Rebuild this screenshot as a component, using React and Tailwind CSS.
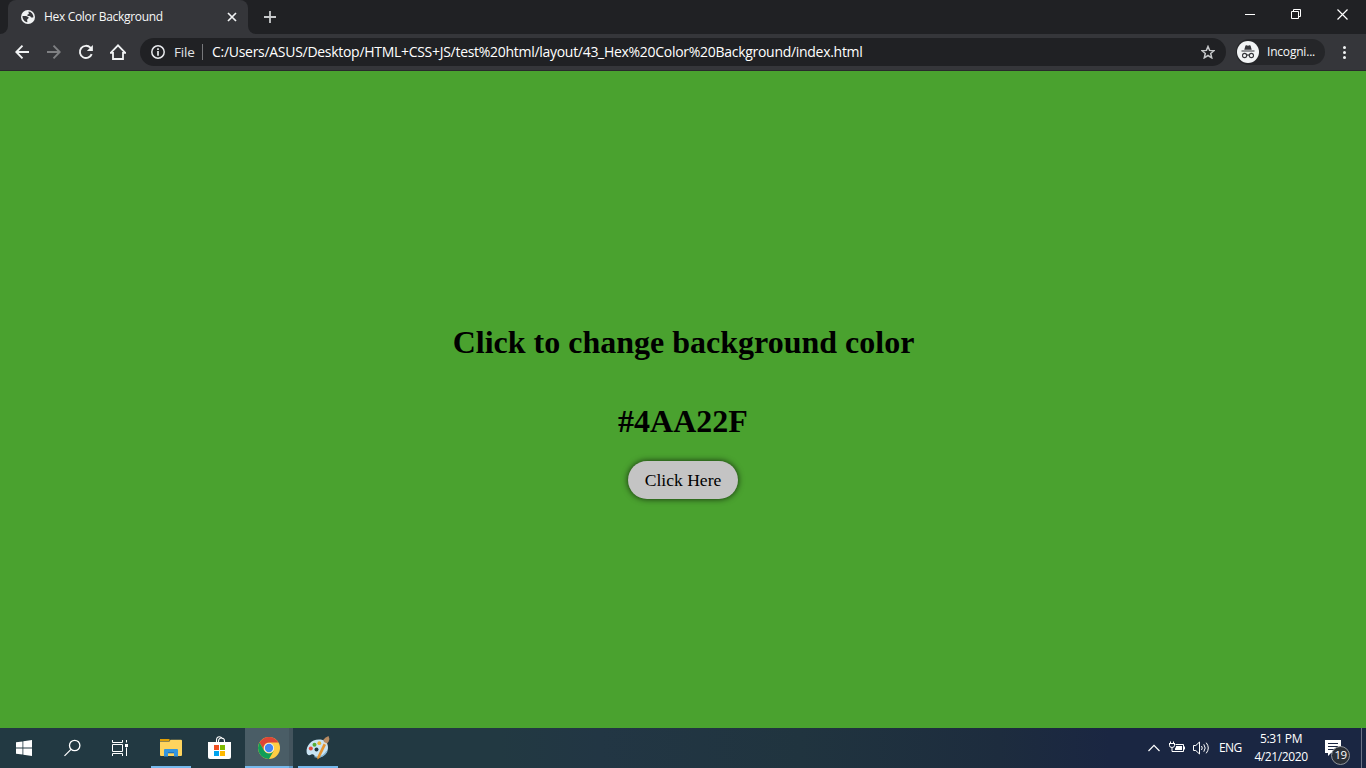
const ui = "font-['Open_Sans','Noto_Sans',sans-serif]";

function TabBar() {
  return (
    <div className="flex h-[34px] bg-[#202124]">
      <div className="flex w-2 items-end bg-[#35363a]">
        <div className="h-[34px] w-2 rounded-br-lg bg-[#202124]" />
      </div>
      <div className="w-[240px] bg-[#202124]">
        <div className="flex h-[34px] items-center rounded-t-lg bg-[#35363a] pl-[13px] pr-[11px]">
          <svg className="h-[14px] w-[14px]" viewBox="0 0 14 14">
            <circle cx="7" cy="7" r="7" fill="#f1f3f4" />
            <path d="M1.500 6h3.300c1.500 0 1.700 1.200 2.900 1.300 0 1.700-1.500 1.200-1.600 2.700 0 .8.6 1.300.1 2.200C3.500 11.800 1.400 9.100 1.500 6z" fill="#35363a" />
            <path d="M7.600 1.600c-.6 1.300.7 1.200.2 2.200-.4.8-1.700.6-1.600 1.500.1 1 1.500.5 2.300.6 1.200.1 1.100 1.300 1.900 1.600.8.2 1.200-.2 2-.3-.1-2.700-2-5.400-4.800-5.600z" fill="#35363a" />
          </svg>
          <span className={`ml-[9px] whitespace-nowrap text-[12px] leading-4 tracking-[-0.32px] text-[#f7f8f8] ${ui}`}>Hex Color Background</span>
          <svg className="ml-auto h-[10px] w-[10px]" viewBox="0 0 10 10" stroke="#f1f3f4" strokeWidth="1.700">
            <path d="M1 1l8 8M9 1l-8 8" />
          </svg>
        </div>
      </div>
      <div className="w-2 bg-[#35363a]">
        <div className="h-[34px] w-2 rounded-bl-lg bg-[#202124]" />
      </div>
      <svg className="ml-2 mt-[11px] h-3 w-3" viewBox="0 0 12 12" stroke="#c8cacc" strokeWidth="1.800">
        <path d="M6 0v12M0 6h12" />
      </svg>
      <div className="ml-auto flex pr-[18px] pt-[9px]">
        <svg className="h-[11px] w-[11px]" viewBox="0 0 11 11" stroke="#fff">
          <path d="M0 5.500h10" />
        </svg>
        <svg className="ml-[35px] h-[11px] w-[11px]" viewBox="0 0 11 11" fill="none" stroke="#fff">
          <path d="M.5 2.500h7v7h-7zM2.500 2.500v-2h7v7h-2" />
        </svg>
        <svg className="ml-[35px] h-[11px] w-[11px]" viewBox="0 0 11 11" stroke="#fff" strokeWidth="1.200">
          <path d="M.5.5l10 10M10.500.5l-10 10" />
        </svg>
      </div>
    </div>
  );
}

function Toolbar() {
  return (
    <div className="flex h-[37px] items-center border-b border-[#29292c] bg-[#35363a] pl-[15px]">
      <svg className="h-[14px] w-[14px]" viewBox="0 0 14 14" fill="none" stroke="#f1f3f4" strokeWidth="1.900">
        <path d="M14 7H1.500M7.500.7L1.300 7l6.200 6.300" />
      </svg>
      <svg className="ml-[18px] h-[14px] w-[14px]" viewBox="0 0 14 14" fill="none" stroke="#7f8083" strokeWidth="1.900">
        <path d="M0 7h12.500M6.500.7L12.700 7l-6.200 6.300" />
      </svg>
      <svg className="ml-[17px] h-4 w-4" viewBox="0 0 16 16">
        <path d="M13.700 10.100A6.100 6.100 0 1 1 12.400 3.700L13.500 4.800" fill="none" stroke="#f1f3f4" strokeWidth="1.900" />
        <path d="M14.900 1v6h-6z" fill="#f1f3f4" />
      </svg>
      <svg className="ml-4 h-4 w-4" viewBox="0 0 16 16" fill="none" stroke="#f1f3f4" strokeWidth="1.800">
        <path d="M0 8.800h3V15h10V8.800h3M.7 8.800L8 1.300l7.300 7.500" />
      </svg>
      <div className="ml-[14px] flex h-7 w-[1086px] items-center rounded-full bg-[#202124] pl-[11px] pr-[11px]">
        <svg className="h-[14px] w-[14px]" viewBox="0 0 14 14">
          <circle cx="7" cy="7" r="6.200" fill="none" stroke="#e8eaed" strokeWidth="1.500" />
          <path d="M7 3.200v1.700M7 6v4.700" stroke="#e8eaed" strokeWidth="1.700" />
        </svg>
        <span className={`ml-[9px] w-[21px] whitespace-nowrap text-[13.500px] leading-5 tracking-[-0.2px] text-[#e0e2e4] ${ui}`}>File</span>
        <div className="ml-[7px] h-4 w-px bg-[#77787b]" />
        <span className={`ml-[9px] whitespace-nowrap text-[14px] leading-5 tracking-[-0.29px] text-white ${ui}`}>
          C:/Users/ASUS/Desktop/HTML+CSS+JS/test%20html/layout/43_Hex%20Color%20Background/index.html
        </span>
        <svg className="ml-auto h-[14px] w-[14px]" viewBox="0 0 14 14" fill="none" stroke="#c6c8ca" strokeWidth="1.500">
          <path d="M7 1.500l1.600 3.900 4.400.3-3.300 2.800 1 4.300L7 10.500l-3.700 2.300 1-4.300L1 5.700l4.400-.3z" />
        </svg>
      </div>
      <div className="ml-[10px] flex h-[26px] w-[89px] items-center rounded-full bg-[#252629] pl-px">
        <svg className="h-[22px] w-[22px]" viewBox="0 0 22 22">
          <circle cx="11" cy="11" r="11" fill="#f1f3f4" />
          <path d="M7.300 8.800L8.400 4.800q.3-.8 1.100-.5l1.500.4 1.500-.4q.8-.3 1.100.5l1.100 4zM4.500 9.500h13v1h-13z" fill="#35363a" />
          <g fill="none" stroke="#35363a" strokeWidth="1.100">
            <circle cx="7.600" cy="14.500" r="2.100" />
            <circle cx="14.400" cy="14.500" r="2.100" />
            <path d="M9.800 14.300q1.200-.8 2.400 0" />
          </g>
        </svg>
        <span className={`ml-2 whitespace-nowrap text-[12px] leading-4 tracking-[-0.2px] text-[#f7f8f8] ${ui}`}>Incogni...</span>
      </div>
      <div className="ml-[18px] flex flex-col gap-[2px]">
        <div className="h-[3px] w-[3px] rounded-full bg-[#f1f3f4]" />
        <div className="h-[3px] w-[3px] rounded-full bg-[#f1f3f4]" />
        <div className="h-[3px] w-[3px] rounded-full bg-[#f1f3f4]" />
      </div>
    </div>
  );
}

function Page() {
  return (
    <main className="flex h-[657px] flex-col items-center bg-[#4aa22f] pt-[253px] font-['Liberation_Serif',serif] text-black">
      <h1 className="whitespace-nowrap pl-px text-[32px] font-bold leading-9">Click to change background color</h1>
      <h1 className="mt-[43px] text-[32px] font-bold leading-9">#4AA22F</h1>
      <button className="mt-[21.500px] h-[38px] w-[110px] shrink-0 whitespace-nowrap rounded-full bg-[#c4c4c4] text-[17.600px] leading-5 shadow-[0_0_6px_0px_rgba(0,0,0,0.75)]">
        Click Here
      </button>
    </main>
  );
}

function Taskbar() {
  return (
    <footer className="flex h-10 bg-[linear-gradient(90deg,#223942_0px,#223942_500px,#223644_600px,#20343f_800px,#1d2c3e_1000px,#1a2642_1110px,#1a2642_1366px)] text-white">
      <svg className="ml-4 mt-3 h-4 w-4" viewBox="0 0 16 16" fill="#fff">
        <path d="M0 2.300L6.500 1.400v6.200H0zM7.300 1.300L16 0v7.600H7.300zM0 8.400h6.500v6.200L0 13.700zM7.300 8.400H16V16l-8.700-1.300z" />
      </svg>
      <svg className="ml-8 mt-[11px] h-[18px] w-[17px]" viewBox="0 0 17 18" fill="none" stroke="#fff" strokeWidth="1.300">
        <circle cx="10.700" cy="6.500" r="5.200" />
        <path d="M7 10.400L.5 16.900" />
      </svg>
      <svg className="ml-[31px] mt-3 h-4 w-[17px]" viewBox="0 0 17 16" fill="none" stroke="#fff">
        <path d="M.5 0v2.500h10V0M.5 4.500h10v7H.5zM.5 16v-2.500h10V16M14.500 0v2.500M14.500 7.500V16" />
        <path d="M13 4h3v3h-3z" fill="#fff" stroke="none" />
      </svg>
      <div className="ml-[22px] flex h-10 w-10 flex-col items-center justify-between border-b-2 border-[#76b9ed] pt-[10px]">
        <svg className="h-[19px] w-[22px]" viewBox="0 0 22 19">
          <path d="M0 3.500h9.500l1-1.700H21q1 0 1 1V17q0 1-1 1H1q-1 0-1-1z" fill="#ffd45e" />
          <path d="M0 1h9l1 1-1 1H0z" fill="#e1a006" />
          <path d="M4 18.500v-6.500q0-1 1-1h12q1 0 1 1v6.500h-4V14H8v4.500z" fill="#3495df" />
          <path d="M8 14h6v1.300H8z" fill="#1f74bd" />
        </svg>
      </div>
      <svg className="ml-[17px] mt-[8px] h-[23px] w-[23px]" viewBox="0 0 23 23">
        <path d="M8.500 7V4.500q0-3.700 3-3.700 2.300 0 3 2.200M10.500 7V5q.2-3 3-3 3 0 3 3v2" fill="none" stroke="#fff" strokeWidth="1.100" />
        <path d="M0 6h23v15q0 2-2 2H2q-2 0-2-2z" fill="#fff" />
        <path d="M6 9h5v5H6z" fill="#f25022" /><path d="M12 9h5v5h-5z" fill="#7fba00" />
        <path d="M6 15h5v5H6z" fill="#00a4ef" /><path d="M12 15h5v5h-5z" fill="#ffb900" />
      </svg>
      <div className="ml-[14px] flex h-10 w-11 justify-center border-b-2 border-[#76b9ed] bg-[#4a5d66] pl-1 pt-[9px]">
        <svg className="h-[22px] w-[22px]" viewBox="0 0 22 22">
          <circle cx="11" cy="11" r="11" fill="#ffcd43" />
          <path d="M1.500 5.500A11 11 0 0 1 20.500 5.500H11A5.500 5.500 0 0 0 6.200 13.700z" fill="#dc4437" />
          <path d="M1.500 5.500L6.200 13.700A5.500 5.500 0 0 0 15.800 13.700L11 22A11 11 0 0 1 1.500 5.500z" fill="#109d58" />
          <circle cx="11" cy="11" r="5.100" fill="#f1f3f4" />
          <circle cx="11" cy="11" r="4.200" fill="#4285f4" />
        </svg>
      </div>
      <div className="h-10 w-[4px] border-b-2 border-[#629bc6] bg-[#43545d]" />
      <div className="ml-[5px] flex h-10 w-10 justify-center border-b-2 border-[#76b9ed] pt-2">
        <svg className="h-6 w-6" viewBox="0 0 24 24">
          <path d="M13 3.500C5 3.500 0 10 .6 16c.3 3 2.200 3.700 4.300 2.700 2-1 3-.3 3.800 1.400C12 24 21.500 20 22 12 22.300 6 18 3.500 13 3.500z" fill="#c9e4f3" />
          <path d="M8.500 20.700q8 2 12.500-5.500" fill="none" stroke="#82b3d1" strokeWidth="1.300" />
          <circle cx="10.500" cy="13.500" r="2" fill="#203740" />
          <circle cx="4.800" cy="12.500" r="2" fill="#e54b3d" />
          <circle cx="8.500" cy="8.700" r="2" fill="#54aa35" />
          <circle cx="13.300" cy="7.200" r="1.900" fill="#eeb42d" />
          <path d="M17.600 7.500l2.600 1L13.500 22l-2 1.500-.3-2.500z" fill="#e49432" />
          <path d="M18 6.500l-.5-3Q19.500 1 22.500 0q1.500 2.500.2 5.500l-2 2.500z" fill="#b78b62" />
          <path d="M17.900 6l3.300 1.400-.7 1.500-2.900-1.200z" fill="#dddcd2" />
        </svg>
      </div>
      <div className="ml-auto flex h-10">
        <svg className="mt-4 h-2 w-3" viewBox="0 0 12 8" fill="none" stroke="#fff" strokeWidth="1.200">
          <path d="M.5 7L6 1.300 11.500 7" />
        </svg>
        <svg className="ml-[9px] mt-[13px] h-[13px] w-4" viewBox="0 0 16 13" fill="none" stroke="#fff">
          <path d="M6.500 3.500h8v7h-10M1.500.5v2M4.500.5v2M0 2.500h6M.5 2.500v2q0 2 2.500 2t2.500-2v-2M3 6.500v4h2M15.500 5.500v3" />
          <path d="M7 5h6v4H6V7.500L7 6z" fill="#fff" stroke="none" />
        </svg>
        <svg className="ml-[8px] mt-[13px] h-[14px] w-[17px]" viewBox="0 0 17 14" fill="none" stroke="#fff">
          <path d="M.5 4.500h2.300L6.500 1v12L2.800 9.500H.5z" />
          <path d="M8.500 5q1.500 2 0 4M10.800 3.300q2.800 3.700 0 7.400M13.200 1.700q4.200 5.300 0 10.600" />
        </svg>
        <span className={`ml-[9px] mt-[12px] w-[23px] whitespace-nowrap text-[12px] leading-4 tracking-[-0.6px] ${ui}`}>ENG</span>
        <div className={`ml-[9px] flex w-[60px] flex-col items-center whitespace-nowrap text-[12px] leading-[18px] tracking-[-0.4px] ${ui}`}>
          <span className="mt-[2px]">5:31 PM</span>
          <span>4/21/2020</span>
        </div>
        <div className="relative ml-[14px] mt-3 h-7 w-[27px]">
          <svg className="h-4 w-4" viewBox="0 0 16 16">
            <path d="M0 0h16v13H6l-3 3v-3H0z" fill="#fff" />
            <path d="M3 3.500h10M3 6.500h10M3 9.500h7" stroke="#1a2642" />
          </svg>
          <div className={`absolute left-[6px] top-[6px] flex h-[19px] w-[19px] items-center justify-center rounded-full border border-[#909499] bg-[#2b3037] text-[11.500px] font-medium leading-none tracking-[-0.6px] ${ui}`}><span className="-translate-y-px">19</span></div>
        </div>
        <div className="ml-[9px] mr-1 h-10 w-px bg-[#6b7386]" />
      </div>
    </footer>
  );
}

export default function App() {
  return (
    <div className="flex h-[768px] w-[1366px] flex-col overflow-hidden">
      <TabBar />
      <Toolbar />
      <Page />
      <Taskbar />
    </div>
  );
}
